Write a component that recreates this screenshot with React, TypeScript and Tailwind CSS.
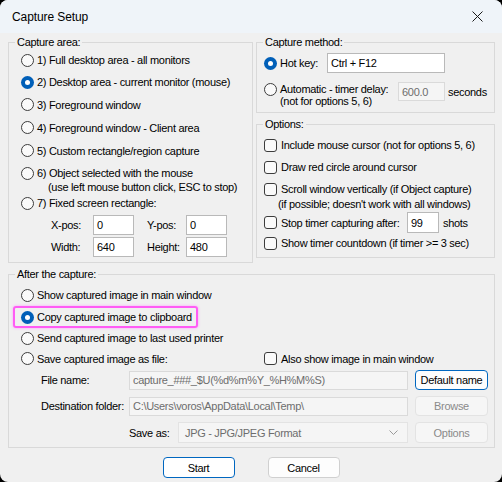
import React from "react";

const Radio = ({ checked = false }: { checked?: boolean }) =>
  checked ? (
    <span className="flex h-[13px] w-[13px] shrink-0 items-center justify-center rounded-full bg-[#005fb8]">
      <span className="h-[5px] w-[5px] rounded-full bg-white" />
    </span>
  ) : (
    <span className="block h-[13px] w-[13px] shrink-0 rounded-full border border-[#3c3c3c] bg-[#fafafa]" />
  );

const Check = () => (
  <span className="block h-[13px] w-[13px] shrink-0 rounded-[3px] border border-[#3c3c3c] bg-[#fafafa]" />
);

const TextBox = ({ value, className = "", disabled = false }: { value: string; className?: string; disabled?: boolean }) => (
  <div
    className={`flex items-center border pl-[3px] ${
      disabled ? "border-[#dadada] bg-[#f5f5f5] text-[#6d6d6d]" : "border-[#b9b9b9] bg-white text-black"
    } ${className}`}
  >
    {value}
  </div>
);

const Group = ({ title, className = "", children }: { title: string; className?: string; children: React.ReactNode }) => (
  <fieldset className={`border border-[#d9d9d9] ${className}`}>
    <legend className="ml-[6px] px-[2px] leading-[13px]">{title}</legend>
    {children}
  </fieldset>
);

const Button = ({ label, variant = "normal", className = "" }: { label: string; variant?: "normal" | "focus" | "disabled"; className?: string }) => {
  const look =
    variant === "focus"
      ? "border-[#0067c0] bg-[#fdfdfd] text-black"
      : variant === "disabled"
        ? "border-[#e3e3e3] bg-[#f6f6f6] text-[#8a8a8a]"
        : "border-[#d0d0d0] bg-[#fdfdfd] text-black";
  return (
    <div className={`flex items-center justify-center rounded-[4px] border ${look} ${className}`}>{label}</div>
  );
};

export default function App() {
  return (
    <div className="h-[482px] w-[502px] bg-black font-['Liberation_Sans',Arial,sans-serif] text-[11px] leading-[14px] tracking-[-0.3px] text-black">
      <div className="flex h-full w-full flex-col overflow-hidden rounded-[8px] bg-[#f0f0f0]">
        {/* title bar */}
        <div className="flex h-[33px] shrink-0 items-center justify-between bg-[#eff4f9] pl-[12px] pr-[2px]">
          <span className="text-[12px] tracking-[-0.1px]">Capture Setup</span>
          <div className="flex h-[33px] w-[46px] items-center justify-center">
            <svg width="11" height="11" viewBox="0 0 11 11" fill="none" stroke="#1a1a1a" strokeWidth="1">
              <path d="M0.5 0.5l10 10M10.5 0.5l-10 10" />
            </svg>
          </div>
        </div>

        <div className="flex flex-col pl-[8px] pt-[3px]">
          <div className="flex items-start gap-[3px]">
            {/* Capture area */}
            <Group title="Capture area:" className="w-[245px]">
              <div className="flex flex-col pb-[5px] pl-[12px]">
                <div className="flex h-[22px] items-center gap-[3px]"><Radio />1) Full desktop area - all monitors</div>
                <div className="flex h-[22px] items-center gap-[3px]"><Radio checked />2) Desktop area - current monitor (mouse)</div>
                <div className="flex h-[23px] items-center gap-[3px]"><Radio />3) Foreground window</div>
                <div className="flex h-[23px] items-center gap-[3px]"><Radio />4) Foreground window - Client area</div>
                <div className="flex h-[23px] items-center gap-[3px]"><Radio />5) Custom rectangle/region capture</div>
                <div className="flex h-[32px] items-start gap-[3px] pt-[4px]">
                  <span className="mt-[0.5px] block"><Radio /></span>
                  <div>
                    <div>6) Object selected with the mouse</div>
                    <div className="pl-[11px]">(use left mouse button click, ESC to stop)</div>
                  </div>
                </div>
                <div className="flex h-[18px] items-center gap-[3px]"><Radio />7) Fixed screen rectangle:</div>
                <div className="mt-[3px] flex h-[20px] items-center pl-[30px]">
                  <span className="w-[42px]">X-pos:</span>
                  <TextBox value="0" className="h-[20px] w-[41px]" />
                  <span className="ml-[13px] w-[39px]">Y-pos:</span>
                  <TextBox value="0" className="h-[20px] w-[41px]" />
                </div>
                <div className="mt-[2px] flex h-[20px] items-center pl-[30px]">
                  <span className="w-[42px]">Width:</span>
                  <TextBox value="640" className="h-[20px] w-[41px]" />
                  <span className="ml-[13px] w-[39px]">Height:</span>
                  <TextBox value="480" className="h-[20px] w-[41px]" />
                </div>
              </div>
            </Group>

            <div className="flex w-[239px] flex-col">
              {/* Capture method */}
              <Group title="Capture method:">
                <div className="flex flex-col pb-[5px] pl-[7px]">
                  <div className="mt-[4px] flex h-[20px] items-center">
                    <Radio checked />
                    <span className="ml-[3px] w-[47px]">Hot key:</span>
                    <TextBox value="Ctrl + F12" className="h-[20px] w-[118px]" />
                  </div>
                  <div className="mt-[10px] flex items-start leading-[12px]">
                    <span className="mt-[-0.5px] block"><Radio /></span>
                    <div className="ml-[3px] w-[118px]">
                      <div>Automatic - timer delay:</div>
                      <div>(not for options 5, 6)</div>
                    </div>
                    <TextBox value="600.0" disabled className="mt-[-1px] h-[19px] w-[47px]" />
                    <span className="ml-[3px] mt-[3px]">seconds</span>
                  </div>
                </div>
              </Group>

              {/* Options */}
              <Group title="Options:" className="mt-[5px]">
                <div className="flex flex-col pb-[4px] pl-[7px]">
                  <div className="mt-[3px] flex h-[22px] items-center gap-[4px]"><Check />Include mouse cursor (not for options 5, 6)</div>
                  <div className="flex h-[22px] items-center gap-[4px]"><Check />Draw red circle around cursor</div>
                  <div className="flex h-[34px] items-start gap-[4px] pt-[4px] leading-[15px]">
                    <span className="mt-[1px] block"><Check /></span>
                    <div>
                      <div>Scroll window vertically (if Object capture)</div>
                      <div className="-ml-[3px]">(if possible; doesn't work with all windows)</div>
                    </div>
                  </div>
                  <div className="flex h-[21px] items-center">
                    <Check />
                    <span className="ml-[4px] w-[126px]">Stop timer capturing after:</span>
                    <TextBox value="99" className="h-[21px] w-[32px]" />
                    <span className="ml-[4px]">shots</span>
                  </div>
                  <div className="flex h-[20px] items-center gap-[4px]"><Check />Show timer countdown (if timer &gt;= 3 sec)</div>
                </div>
              </Group>
            </div>
          </div>

          {/* After the capture */}
          <Group title="After the capture:" className="mt-[5px] w-[487px]">
            <div className="flex flex-col pb-[4px] pl-[12px]">
              <div className="mt-[3px] flex h-[22px] items-center gap-[3px]"><Radio />Show captured image in main window</div>
              <div className="-ml-[8px] flex h-[22px] w-[185px] items-center gap-[3px] rounded-[3px] border-2 border-[#ff5cf5] pl-[6px] shadow-[0_0_3px_#ff9cff]">
                <Radio checked />Copy captured image to clipboard
              </div>
              <div className="flex h-[20px] items-center gap-[3px]"><Radio />Send captured image to last used printer</div>
              <div className="flex h-[21px] items-center">
                <div className="flex w-[243px] items-center gap-[3px]"><Radio />Save captured image as file:</div>
                <div className="flex items-center gap-[4px]"><Check />Also show image in main window</div>
              </div>
              <div className="mt-[1px] flex h-[20px] items-center pl-[20px]">
                <span className="w-[88px]">File name:</span>
                <TextBox value="capture_###_$U(%d%m%Y_%H%M%S)" disabled className="h-[19px] w-[279px]" />
                <Button label="Default name" variant="focus" className="ml-[7px] h-[20px] w-[73px]" />
              </div>
              <div className="mt-[6px] flex h-[20px] items-center pl-[20px]">
                <span className="w-[88px]">Destination folder:</span>
                <TextBox value="C:\Users\voros\AppData\Local\Temp\" disabled className="h-[19px] w-[279px]" />
                <Button label="Browse" variant="disabled" className="ml-[7px] h-[20px] w-[73px]" />
              </div>
              <div className="mt-[6px] flex h-[21px] items-center pl-[108px]">
                <span className="w-[49px]">Save as:</span>
                <div className="flex h-[21px] w-[230px] items-center justify-between border border-[#e3e3e3] bg-[#f5f5f5] pl-[6px] pr-[9px] text-[#6d6d6d]">
                  <span>JPG - JPG/JPEG Format</span>
                  <svg width="9" height="5" viewBox="0 0 9 5" fill="none" stroke="#9a9a9a" strokeWidth="1">
                    <path d="M0.5 0.5l4 4 4-4" />
                  </svg>
                </div>
                <Button label="Options" variant="disabled" className="ml-[7px] h-[21px] w-[73px]" />
              </div>
            </div>
          </Group>

          <div className="mt-[9px] flex justify-center gap-[33px] pr-[8px]">
            <Button label="Start" variant="focus" className="h-[21px] w-[72px] bg-white" />
            <Button label="Cancel" className="h-[21px] w-[72px]" />
          </div>
        </div>
      </div>
    </div>
  );
}
